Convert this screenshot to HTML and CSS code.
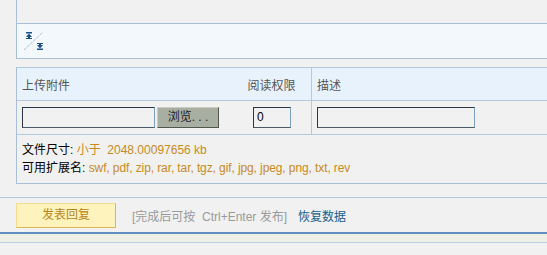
FILE: index.html
```html
<!DOCTYPE html>
<html lang="zh-CN">
<head>
  <meta charset="UTF-8" />
  <title>发表回复</title>
  <link rel="stylesheet" href="styles.css">
</head>
<body>
  <div class="wrap">
    <div class="editor"></div>
    <div class="toolbar">
      <svg class="resize-icon" width="24" height="22" viewBox="0 0 24 22">
        <line x1="2" y1="20" x2="21" y2="2" stroke="#8fa6c2" stroke-width="1" stroke-dasharray="1 1" />
        <rect x="4" y="2" width="6" height="1.5" fill="#1f4f8a" />
        <polygon points="7,3.5 4,7 10,7" fill="#1f4f8a" />
        <rect x="6" y="7" width="2" height="1" fill="#1f4f8a" />
        <rect x="4" y="8" width="6" height="1" fill="#1f4f8a" />
        <rect x="15" y="13" width="6" height="1" fill="#1f4f8a" />
        <rect x="17" y="14" width="2" height="1" fill="#1f4f8a" />
        <polygon points="15,15 21,15 18,18.5" fill="#1f4f8a" />
        <rect x="15" y="18.5" width="6" height="1.5" fill="#1f4f8a" />
      </svg>
    </div>

    <div class="attach">
      <div class="attach-row head">
        <div class="cell c1">上传附件</div>
        <div class="cell c2">阅读权限</div>
        <div class="cell c3">描述</div>
      </div>
      <div class="attach-row">
        <div class="cell c1">
          <span class="field file-field"></span>
          <span class="browse">浏览. . .</span>
        </div>
        <div class="cell c2"><span class="field perm-field">0</span></div>
        <div class="cell c3"><span class="field desc-field"></span></div>
      </div>
      <div class="attach-info">
        <div>文件尺寸: <em>小于&nbsp; 2048.00097656 kb</em></div>
        <div>可用扩展名: <em class="exts">swf, pdf, zip, rar, tar, tgz, gif, jpg, jpeg, png, txt, rev</em></div>
      </div>
    </div>
  </div>

  <div class="postbar">
    <span class="post-btn">发表回复</span>
    <span class="hint">[完成后可按&nbsp; Ctrl+Enter 发布]</span>
    <a class="restore" href="#">恢复数据</a>
  </div>
  <div class="band"></div>
</body>
</html>
```

FILE: styles.css
```css
body {
  margin: 0;
  background-color: #f1f1f1;
  font-family: "Liberation Sans", "Noto Sans CJK SC", sans-serif;
  font-size: 12px;
  color: #000;
  overflow: hidden;
}

.wrap {
  padding-left: 16px;
}

.editor {
  height: 23px;
  border-left: 1px solid #a9bfd6;
}

.toolbar {
  height: 34px;
  background: #f3f8fc;
  border: 1px solid #a9bfd6;
  border-right: none;
}

.resize-icon {
  display: block;
  margin: 6px 0 0 5px;
}

.attach {
  margin-top: 8px;
  border-top: 1px solid #b3c9de;
  border-left: 1px solid #a9bfd6;
  border-bottom: 1px solid #a9bfd6;
}

.attach-row {
  display: grid;
  grid-template-columns: 215px 80px 1fr;
  height: 33px;
  border-bottom: 1px solid #b3c9de;
}

.attach-row.head {
  height: 32px;
  background: #e8f2fc;
  color: #555;
}

.cell {
  display: flex;
  align-items: center;
  padding-left: 5px;
}

.cell.c2 {
  justify-content: center;
  padding-left: 0;
  border-right: 1px solid #b3c9de;
}

.field {
  display: block;
  box-sizing: border-box;
  height: 21px;
  border: 1px solid;
  border-color: #2a3646 #7f9fc6 #4a5868 #2a3646;
  background: #f1f1f1;
  line-height: 19px;
  padding-left: 3px;
}

.file-field {
  width: 133px;
}

.browse {
  box-sizing: border-box;
  width: 62px;
  height: 21px;
  margin-left: 2px;
  background: #a8afa2;
  border: 1px solid;
  border-color: #c8cfc2 #505850 #505850 #c8cfc2;
  text-align: center;
  line-height: 19px;
  color: #222;
}

.perm-field {
  width: 38px;
  margin-left: 1px;
}

.desc-field {
  width: 158px;
}

.attach-info {
  padding: 6px 0 6px 5px;
  line-height: 18px;
}

.attach-info em {
  font-style: normal;
  color: #c88a22;
}

.attach-info .exts {
  letter-spacing: -0.1px;
}

.postbar {
  margin-top: 13px;
  border-top: 1px solid #b3c9de;
  border-bottom: 2px solid #6090c0;
  height: 34px;
  display: flex;
  align-items: center;
  padding-left: 16px;
}

.post-btn {
  box-sizing: border-box;
  width: 100px;
  height: 25px;
  background: #fff3bd;
  border: 1px solid;
  border-color: #f5dc90 #dcb75a #dcb75a #f5dc90;
  color: #b8861a;
  text-align: center;
  line-height: 23px;
  margin-right: 16px;
}

.hint {
  color: #9a9a9a;
  margin-right: 11px;
}

.restore {
  color: #17608f;
  text-decoration: none;
}

.band {
  height: 8px;
  background: #eef0e8;
  border-bottom: 1px solid #b8d0e6;
  margin-bottom: 20px;
}

html {
  background: #f5f9fd;
}
```
